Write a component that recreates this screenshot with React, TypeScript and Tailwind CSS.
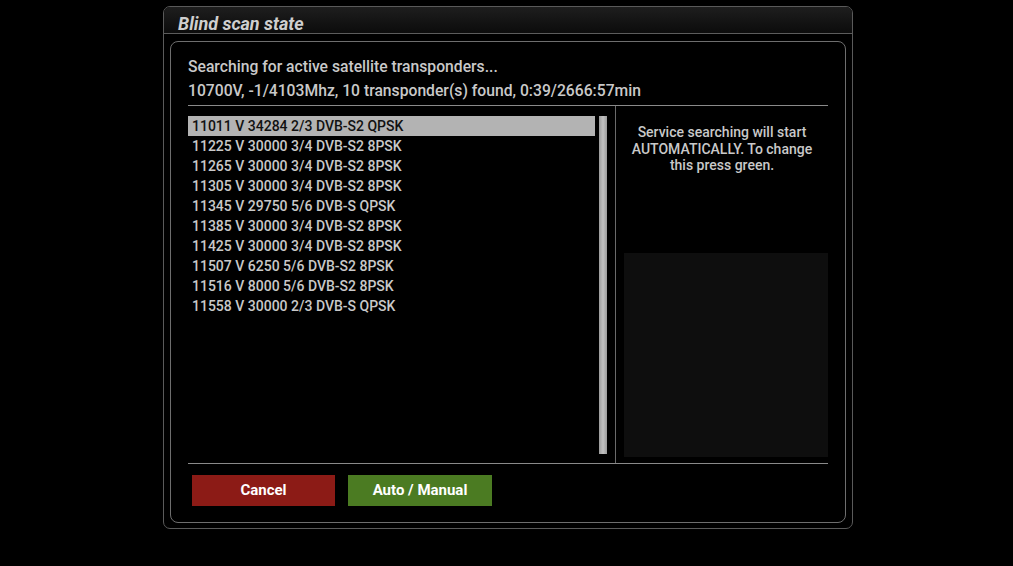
import React from 'react';

const transponders = [
  '11011 V 34284 2/3 DVB-S2 QPSK',
  '11225 V 30000 3/4 DVB-S2 8PSK',
  '11265 V 30000 3/4 DVB-S2 8PSK',
  '11305 V 30000 3/4 DVB-S2 8PSK',
  '11345 V 29750 5/6 DVB-S QPSK',
  '11385 V 30000 3/4 DVB-S2 8PSK',
  '11425 V 30000 3/4 DVB-S2 8PSK',
  '11507 V 6250 5/6 DVB-S2 8PSK',
  '11516 V 8000 5/6 DVB-S2 8PSK',
  '11558 V 30000 2/3 DVB-S QPSK',
];

export default function App() {
  const selected = 0;

  return (
    <div
      className="w-[1013px] h-[566px] bg-black overflow-hidden pt-[6px] pl-[163px]"
      style={{ fontFamily: 'Roboto, "Liberation Sans", sans-serif' }}
    >
      {/* dialog frame */}
      <div className="w-[690px] h-[523px] rounded-[7px] border border-[#5a5a5a] bg-black flex flex-col">
        <div className="h-[27px] rounded-t-[6px] bg-gradient-to-b from-[#1e1e1e] to-[#0c0c0c] border-b border-[#5c5c5c] pl-[14px] flex items-end">
          <span className="text-[18px] leading-[18px] italic font-bold text-[#cfcfcf]">Blind scan state</span>
        </div>

        <div className="mx-[6px] mt-[7px] h-[482px] rounded-[8px] border border-[#6e6e6e] px-[17px] flex flex-col">
          <div className="pt-[13px] text-[15.7px] leading-6 font-medium text-[#c9c9c9]">
            <div>Searching for active satellite transponders...</div>
            <div>10700V, -1/4103Mhz, 10 transponder(s) found, 0:39/2666:57min</div>
          </div>

          <div className="mt-[2px] h-[359px] border-t border-b border-[#8a8a8a] flex">
            {/* transponder list */}
            <div className="w-[407px] pt-[10px]">
              {transponders.map((t, i) => (
                <div
                  key={t}
                  className={
                    i === selected
                      ? 'h-[20px] leading-[20px] pl-[4px] text-[14px] font-medium bg-[#b3b3b3] text-[#111]'
                      : 'h-[20px] leading-[20px] pl-[4px] text-[14px] font-medium text-[#c9c9c9]'
                  }
                >
                  {t}
                </div>
              ))}
            </div>

            {/* scrollbar */}
            <div className="ml-[4px] mt-[10px] w-[8px] h-[338px] bg-gradient-to-r from-[#9c9c9c] via-[#c2c2c2] to-[#9c9c9c]" />

            <div className="ml-[8px] w-px bg-[#6a6a6a]" />

            {/* info column */}
            <div className="flex-1 flex flex-col">
              <div className="pt-[18px] text-center text-[14px] leading-[16.5px] font-medium text-[#c9c9c9]">
                Service searching will start
                <br />
                AUTOMATICALLY. To change
                <br />
                this press green.
              </div>
              <div className="mt-auto mb-[6px] ml-[8px] h-[204px] bg-[#0e0e0e]" />
            </div>
          </div>

          <div className="pt-[11px] flex gap-[13px] pl-[4px]">
            <button className="w-[143px] h-[31px] bg-[#8c1b16] text-white text-[15px] font-bold">Cancel</button>
            <button className="w-[144px] h-[31px] bg-[#4b7b22] text-white text-[15px] font-bold">Auto / Manual</button>
          </div>
        </div>
      </div>
    </div>
  );
}
